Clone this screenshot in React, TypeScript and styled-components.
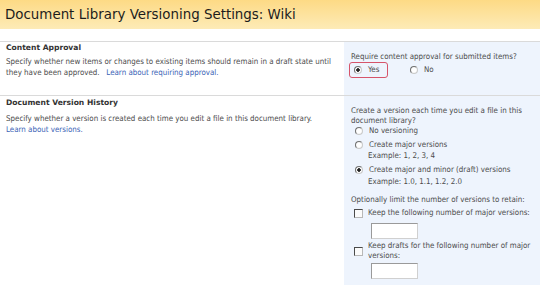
import * as React from 'react';
import styled, { createGlobalStyle } from 'styled-components';

const Global = createGlobalStyle`
    body {
        margin: 0;
        background: #fff;
        font-family: "DejaVu Sans Condensed", "DejaVu Sans", Verdana, sans-serif;
        font-stretch: condensed;
        color: #4c4c4c;
    }
`;

const Page = styled.div`
    width: 540px;
    height: 285px;
    overflow: hidden;
    display: flex;
    flex-direction: column;
`;

const Header = styled.div`
    flex: none;
    height: 28px;
    padding-bottom: 1px;
    margin-bottom: 12px;
    padding-left: 5px;
    display: flex;
    align-items: center;
    background: linear-gradient(to bottom, #fdda85, #fdebb7);
    font-family: "DejaVu Sans", Verdana, sans-serif;
    font-stretch: normal;
    font-size: 13.4px;
    color: #1c1c1c;
`;

const Section = styled.div<{ grow?: boolean }>`
    display: grid;
    grid-template-columns: 344px 1fr;
    border-top: 1px solid #dadada;
    flex: ${p => (p.grow ? '1 1 auto' : 'none')};
`;

const Info = styled.div<{ top: number }>`
    padding: ${p => p.top}px 10px 0 6px;
    font-size: 7.9px;
    line-height: 11px;
`;

const Heading = styled.div<{ gap: number }>`
    font-family: "DejaVu Sans", Verdana, sans-serif;
    font-stretch: normal;
    font-size: 7.6px;
    font-weight: bold;
    line-height: 10px;
    color: #333;
    margin-bottom: ${p => p.gap}px;
`;

const Link = styled.a`
    color: #3a63b6;
    text-decoration: none;
`;

const Panel = styled.div<{ top: number }>`
    background: #eef4fd;
    padding: ${p => p.top}px 2px 0 7px;
    font-size: 7.9px;
    line-height: 10px;
    color: #4c4c4c;
`;

const Choices = styled.div`
    display: flex;
    align-items: center;
    gap: 18px;
    margin: 0 0 0 -2px;
`;

const Highlight = styled.div`
    display: flex;
    align-items: center;
    gap: 6px;
    height: 14px;
    width: 29px;
    padding: 0 4px 0 4px;
    border: 1px solid #d6546a;
    border-radius: 3px;
`;

const Option = styled.label<{ gap?: number }>`
    display: flex;
    align-items: center;
    gap: 6px;
    padding-left: 4px;
    margin-top: ${p => p.gap ?? 0}px;
`;

const Radio = styled.span<{ checked?: boolean }>`
    width: 6px;
    height: 6px;
    border-radius: 50%;
    border: 1px solid #707070;
    border-right-color: #cacaca;
    border-bottom-color: #cacaca;
    background: radial-gradient(circle, ${p => (p.checked ? '#222 0 1.5px, ' : '')}#fff 2px, #e8e8e8 4px);
    flex: none;
`;

const Box = styled.span`
    width: 7px;
    height: 7px;
    border: 1px solid #4a4a4a;
    border-right-color: #b8b8b8;
    border-bottom-color: #b8b8b8;
    background: #fbfbfb;
    flex: none;
`;

const Example = styled.div<{ gap: number }>`
    padding-left: 17px;
    margin-top: ${p => p.gap}px;
`;

const Group = styled.div<{ gap?: number }>`
    margin-top: ${p => p.gap ?? 0}px;
`;

const Field = styled.div<{ gap: number }>`
    margin: ${p => p.gap}px 0 0 20px;
    width: 45px;
    height: 14px;
    border: 1px solid #9a9a9a;
    border-right-color: #d0d0d0;
    border-bottom-color: #d0d0d0;
    background: #fff;
`;

const CheckRow = styled.div<{ gap: number }>`
    display: flex;
    align-items: center;
    gap: 5px;
    padding-left: 3px;
    margin-top: ${p => p.gap}px;
`;

export default function App() {
    return (
        <Page>
            <Global />
            <Header>Document Library Versioning Settings: Wiki</Header>
            <Section>
                <Info top={1}>
                    <Heading gap={3}>Content Approval</Heading>
                    Specify whether new items or changes to existing items should remain in a draft state until
                    they have been approved.&nbsp;&nbsp; <Link href="#">Learn about requiring approval.</Link>
                </Info>
                <Panel top={10} style={{ paddingBottom: 17 }}>
                    Require content approval for submitted items?
                    <Choices>
                        <Highlight>
                            <Radio checked />
                            Yes
                        </Highlight>
                        <Option>
                            <Radio />
                            No
                        </Option>
                    </Choices>
                </Panel>
            </Section>
            <Section grow>
                <Info top={2}>
                    <Heading gap={5}>Document Version History</Heading>
                    Specify whether a version is created each time you edit a file in this document library.
                    <br />
                    <Link href="#">Learn about versions.</Link>
                </Info>
                <Panel top={10}>
                    Create a version each time you edit a file in this document library?
                    <Option>
                        <Radio />
                        No versioning
                    </Option>
                    <Option gap={4}>
                        <Radio />
                        Create major versions
                    </Option>
                    <Example gap={1}>Example: 1, 2, 3, 4</Example>
                    <Option gap={4}>
                        <Radio checked />
                        Create major and minor (draft) versions
                    </Option>
                    <Example gap={2}>Example: 1.0, 1.1, 1.2, 2.0</Example>
                    <Group gap={8}>
                        Optionally limit the number of versions to retain:
                        <CheckRow gap={3}>
                            <Box />
                            Keep the following number of major versions:
                        </CheckRow>
                        <Field gap={5} />
                    </Group>
                    <CheckRow gap={2}>
                        <Box />
                        <span>Keep drafts for the following number of major versions:</span>
                    </CheckRow>
                    <Field gap={2} />
                </Panel>
            </Section>
        </Page>
    );
}
